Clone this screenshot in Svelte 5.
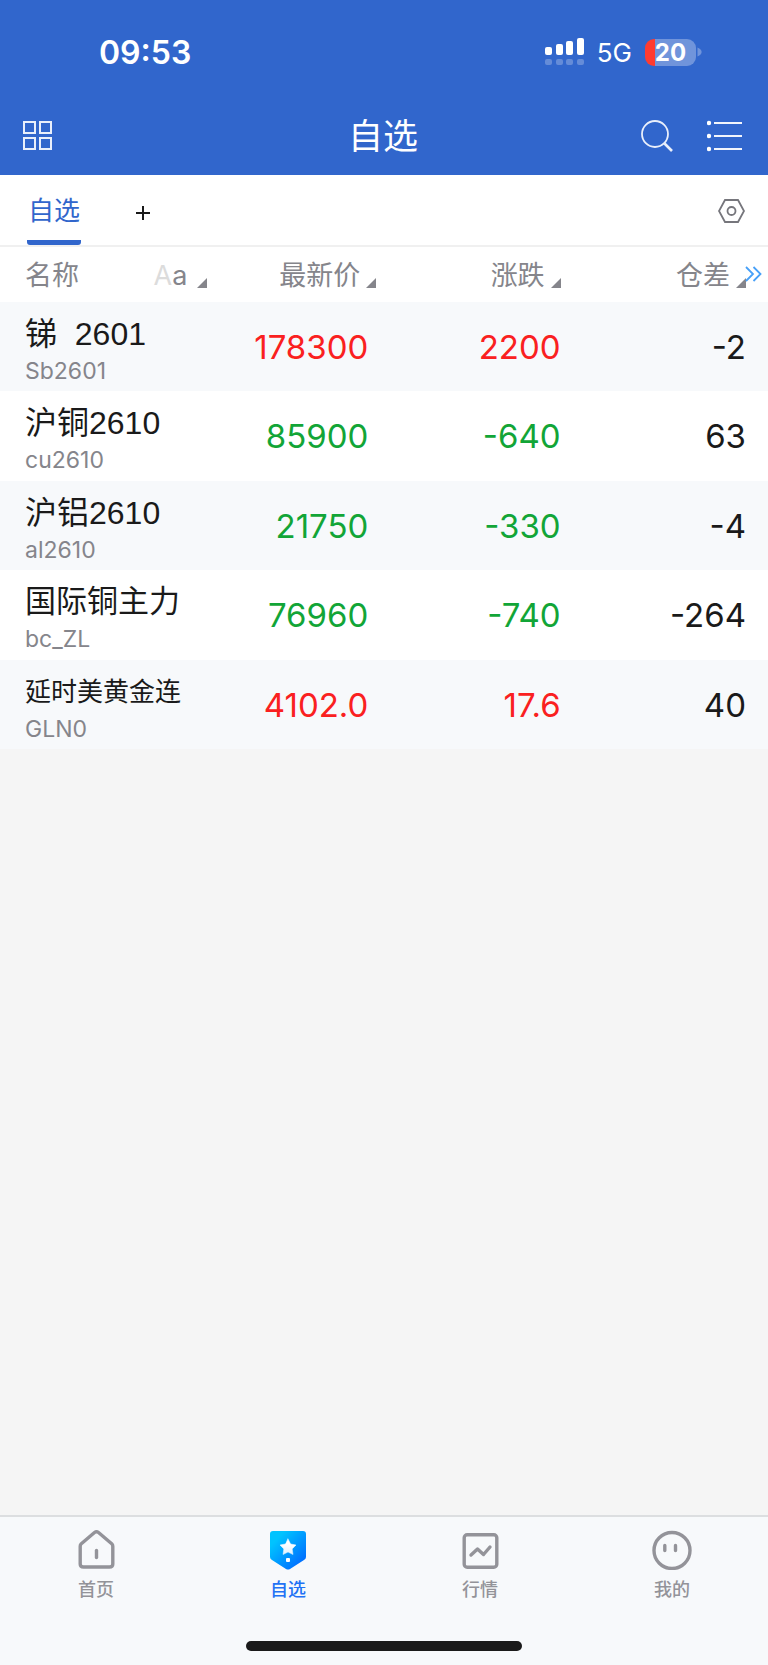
<script lang="ts">
  type Quote = {
    name: string
    code: string
    price: string
    change: string
    diff: string
    size?: "medium" | "small"
  }

  const quotes: Quote[] = [
    { name: "锑\u00a0 2601", code: "Sb2601", price: "178300", change: "2200", diff: "-2" },
    { name: "沪铜2610", code: "cu2610", price: "85900", change: "-640", diff: "63" },
    { name: "沪铝2610", code: "al2610", price: "21750", change: "-330", diff: "-4" },
    { name: "国际铜主力", code: "bc_ZL", price: "76960", change: "-740", diff: "-264", size: "medium" },
    { name: "延时美黄金连", code: "GLN0", price: "4102.0", change: "17.6", diff: "40", size: "small" },
  ]

  const tabs = [
    { id: "home", label: "首页" },
    { id: "watch", label: "自选" },
    { id: "market", label: "行情" },
    { id: "mine", label: "我的" },
  ]

  let current = $state("watch")
</script>

{#snippet corner()}
  <svg class="corner" width="10" height="10" viewBox="0 0 10 10" aria-hidden="true">
    <path d="M10 0V10H0Z" fill="#85858b" />
  </svg>
{/snippet}

<div class="page">
  <header>
    <div class="status">
      <span class="time">09:53</span>
      <div class="signals">
        <svg width="39" height="28" viewBox="0 0 39 28" fill="#fff" aria-hidden="true">
          <rect x="0" y="9" width="7" height="8" rx="2" />
          <rect x="11" y="6" width="7" height="11" rx="2" />
          <rect x="21" y="3" width="7" height="14" rx="2" />
          <rect x="32" y="0" width="7" height="17" rx="2" />
          <g opacity="0.25">
            <rect x="0" y="21" width="7" height="6" rx="2" />
            <rect x="11" y="21" width="7" height="6" rx="2" />
            <rect x="21" y="21" width="7" height="6" rx="2" />
            <rect x="32" y="21" width="7" height="6" rx="2" />
          </g>
        </svg>
        <span class="network">5G</span>
        <div class="battery">
          <span class="level">20</span>
          <svg width="5" height="10" viewBox="0 0 5 10" aria-hidden="true">
            <path d="M0.5 0.5C6 2.5 6 7.5 0.5 9.5Z" fill="#7094db" />
          </svg>
        </div>
      </div>
    </div>

    <div class="bar">
      <button aria-label="菜单">
        <svg width="30" height="30" viewBox="0 0 30 30" fill="none" stroke="#e9effb" stroke-width="2">
          <rect x="1" y="1" width="11" height="11" />
          <rect x="17" y="1" width="11" height="11" />
          <rect x="1" y="17" width="11" height="11" />
          <rect x="17" y="17" width="11" height="11" />
        </svg>
      </button>
      <h1>自选</h1>
      <div class="actions">
        <button aria-label="搜索">
          <svg width="33" height="33" viewBox="0 0 33 33" fill="none" stroke="#e9effb">
            <circle cx="14" cy="14" r="13" stroke-width="1.8" />
            <path d="M23.5 23.5L31 31" stroke-width="2.6" />
          </svg>
        </button>
        <button aria-label="列表">
          <svg width="36" height="32" viewBox="0 0 36 32" stroke="#f2f5fc" stroke-width="2">
            <g fill="#fff" stroke="none">
              <circle cx="2" cy="3" r="2.2" />
              <circle cx="2" cy="16" r="2.2" />
              <circle cx="2" cy="29" r="2.2" />
            </g>
            <path d="M7 3H35M7 16H35M7 29H35" />
          </svg>
        </button>
      </div>
    </div>
  </header>

  <div class="groups">
    <button class="group">自选</button>
    <button class="add" aria-label="添加分组">
      <svg width="14" height="14" viewBox="0 0 14 14" stroke="#1a1a1a" stroke-width="2">
        <path d="M0 7H14M7 0V14" />
      </svg>
    </button>
    <button class="settings" aria-label="设置">
      <svg width="27" height="24" viewBox="0 0 27 24" fill="none" stroke="#76767c" stroke-width="1.8">
        <path d="M7 1H20L26 12L20 23H7L1 12Z" />
        <circle cx="13.5" cy="12" r="4" />
      </svg>
    </button>
  </div>

  <table>
    <colgroup>
      <col class="wide" />
      <col class="price" />
      <col class="change" />
      <col />
    </colgroup>
    <thead>
      <tr>
        <th>
          <div class="name-head">
            <span>名称</span>
            <button><span class="size"><i>A</i>a</span>{@render corner()}</button>
          </div>
        </th>
        <th><button>最新价{@render corner()}</button></th>
        <th><button>涨跌{@render corner()}</button></th>
        <th class="last">
          <button>仓差{@render corner()}</button>
          <svg class="more" width="17" height="16" viewBox="0 0 17 16" fill="none" stroke="#47a0f8" stroke-width="1.8" aria-hidden="true">
            <path d="M1 1L8 8L1 15M8.5 1L15.5 8L8.5 15" />
          </svg>
        </th>
      </tr>
    </thead>
    <tbody>
      {#each quotes as q}
        {@const down = q.change.startsWith("-")}
        <tr>
          <td>
            <div class="name {q.size}">{q.name}</div>
            <div class="code">{q.code}</div>
          </td>
          <td class="num" class:down>{q.price}</td>
          <td class="num flush" class:down>{q.change}</td>
          <td class="diff">{q.diff}</td>
        </tr>
      {/each}
    </tbody>
  </table>

  <footer>
    <nav>
      {#each tabs as tab}
        <button class:active={tab.id === current} onclick={() => (current = tab.id)}>
          <svg width="40" height="40" viewBox="0 0 40 40" fill="none" stroke="#939399" stroke-width="3.4" stroke-linecap="round" stroke-linejoin="round" aria-hidden="true">
            {#if tab.id === "home"}
              <path d="M18.5 2.5Q20.5 1 22.5 2.5L36 14Q36.8 15 36.8 16.5V34Q36.8 37 33.5 37H7.5Q4.2 37 4.2 34V16.5Q4.2 15 5 14Z" />
              <path d="M20.5 20.5V27.5" />
            {:else if tab.id === "watch"}
              <defs>
                <linearGradient id="shield" x1="0" y1="0" x2="1" y2="1">
                  <stop offset="0.2" stop-color="#00c3ff" />
                  <stop offset="0.85" stop-color="#0070ff" />
                </linearGradient>
                <linearGradient id="star" x1="0" y1="0" x2="0" y2="1">
                  <stop offset="0.3" stop-color="#fff" />
                  <stop offset="1" stop-color="#dff1ff" />
                </linearGradient>
              </defs>
              <path d="M5 1H35Q38 1 38 4V27Q38 29 36 30L22 39Q20 40 18 39L4 30Q2 29 2 27V4Q2 1 5 1Z" fill="url(#shield)" stroke="none" />
              <path d="M20 9L22.6 14L28 15L24.2 18.9L25 24.5L20 22L15 24.5L15.8 18.9L12 15L17.4 14Z" fill="url(#star)" stroke="url(#star)" stroke-width="0.5" />
              <rect x="18" y="28" width="4" height="4" rx="1" fill="#fff" stroke="none" />
            {:else if tab.id === "market"}
              <rect x="4.2" y="4.7" width="32.6" height="32.6" rx="3" />
              <path d="M11 25L17.5 19L23.5 24.5L30 17" />
            {:else}
              <circle cx="20" cy="20.5" r="18" />
              <path d="M12.8 15.5V20.5M23.5 15.5V20.5" />
            {/if}
          </svg>
          <span>{tab.label}</span>
        </button>
      {/each}
    </nav>
    <div class="indicator"></div>
  </footer>
</div>

<style>
  :global(body) {
    margin: 0;
  }

  .page {
    display: flex;
    flex-direction: column;
    min-height: 100vh;
    background: #f5f5f5;
    color: #1a1a1a;
    font-family: Inter, "Noto Sans CJK SC", sans-serif;
  }

  button {
    display: flex;
    align-items: center;
    margin: 0;
    padding: 0;
    border: 0;
    background: none;
    color: inherit;
    font: inherit;
    cursor: pointer;
  }

  svg {
    display: block;
    flex: none;
  }

  header {
    background: #3166cc;
    color: #fff;
  }

  .status {
    display: flex;
    align-items: center;
    justify-content: space-between;
    height: 104px;
    padding: 0 66px 0 99px;
  }

  .time {
    font-size: 32px;
    font-weight: 600;
  }

  .signals {
    display: flex;
    align-items: center;
    gap: 13px;
  }

  .network {
    font-size: 26px;
    font-weight: 400;
  }

  .battery {
    display: flex;
    align-items: center;
    gap: 1px;
  }

  .level {
    width: 51px;
    height: 27px;
    border-radius: 9px;
    background: linear-gradient(90deg, #ff3b30 10px, #7094db 10px);
    font-size: 24px;
    font-weight: 700;
    line-height: 27px;
    text-align: center;
  }

  .bar {
    display: grid;
    grid-template-columns: 1fr auto 1fr;
    align-items: center;
    height: 64px;
    padding: 0 25px 7px 23px;
  }

  h1 {
    margin: 0;
    font-size: 35px;
    font-weight: 400;
    line-height: 40px;
  }

  .actions {
    display: flex;
    align-items: center;
    justify-content: flex-end;
    gap: 33px;
  }

  .groups {
    display: flex;
    align-items: center;
    height: 68px;
    padding: 2px 23px 0 27px;
    border-bottom: 2px solid #f0f0f0;
    background: #fff;
  }

  .group {
    box-sizing: border-box;
    height: 68px;
    padding: 5px 1px 0;
    border-bottom: 5px solid #3166cc;
    border-radius: 3px;
    color: #3166cc;
    font-size: 26px;
    line-height: 40px;
  }

  .add {
    margin-left: 55px;
    padding-top: 4px;
  }

  .settings {
    margin-left: auto;
  }

  table {
    width: 100%;
    border-collapse: collapse;
    table-layout: fixed;
    background: #fff;
  }

  .wide {
    width: 27%;
  }

  .price {
    width: 22%;
  }

  .change {
    width: 24%;
  }

  th {
    height: 53px;
    padding: 2px 0 0;
    color: #85858b;
    font-size: 27px;
    font-weight: 400;
    line-height: 40px;
  }

  th button {
    gap: 6px;
    margin-left: auto;
  }

  .corner {
    align-self: flex-end;
    margin-bottom: 8px;
  }

  .name-head {
    display: flex;
    padding-left: 25px;
  }

  .name-head button {
    gap: 10px;
  }

  .size i {
    color: #dcdcdc;
    font-style: normal;
  }

  .last {
    position: relative;
    padding-right: 22px;
  }

  .more {
    position: absolute;
    top: 19px;
    right: 6px;
  }

  tbody tr {
    height: 89px;
  }

  tbody tr:nth-child(odd) {
    background: #f7f9fb;
  }

  tbody tr:nth-child(even) {
    height: 90px;
  }

  td {
    padding: 0;
    font-size: 33px;
    text-align: right;
  }

  td:first-child {
    padding: 8px 0 0 25px;
    text-align: left;
    white-space: nowrap;
  }

  .name {
    font-family: "Liberation Sans", "Noto Sans CJK SC", sans-serif;
    font-size: 32px;
    line-height: 40px;
  }

  .medium {
    font-size: 31px;
  }

  .small {
    font-size: 26px;
  }

  .code {
    color: #85858b;
    font-size: 23px;
    line-height: 34px;
  }

  .num {
    padding-right: 8px;
    color: #fa2020;
  }

  .flush {
    padding-right: 0;
  }

  .down {
    color: #12a537;
  }

  .diff {
    padding-right: 22px;
  }

  footer {
    margin-top: auto;
    padding-bottom: 14px;
    border-top: 2px solid #dcdee0;
    background: #f7f9fb;
  }

  nav {
    display: grid;
    grid-template-columns: repeat(4, 1fr);
    height: 124px;
  }

  nav button {
    flex-direction: column;
    gap: 7px;
    padding-top: 13px;
    color: #939399;
    font-size: 18px;
    font-weight: 500;
    line-height: 26px;
  }

  nav .active {
    color: #2272f5;
  }

  .indicator {
    width: 36%;
    height: 10px;
    margin: 0 auto;
    border-radius: 5px;
    background: #1a1a1a;
  }
</style>
